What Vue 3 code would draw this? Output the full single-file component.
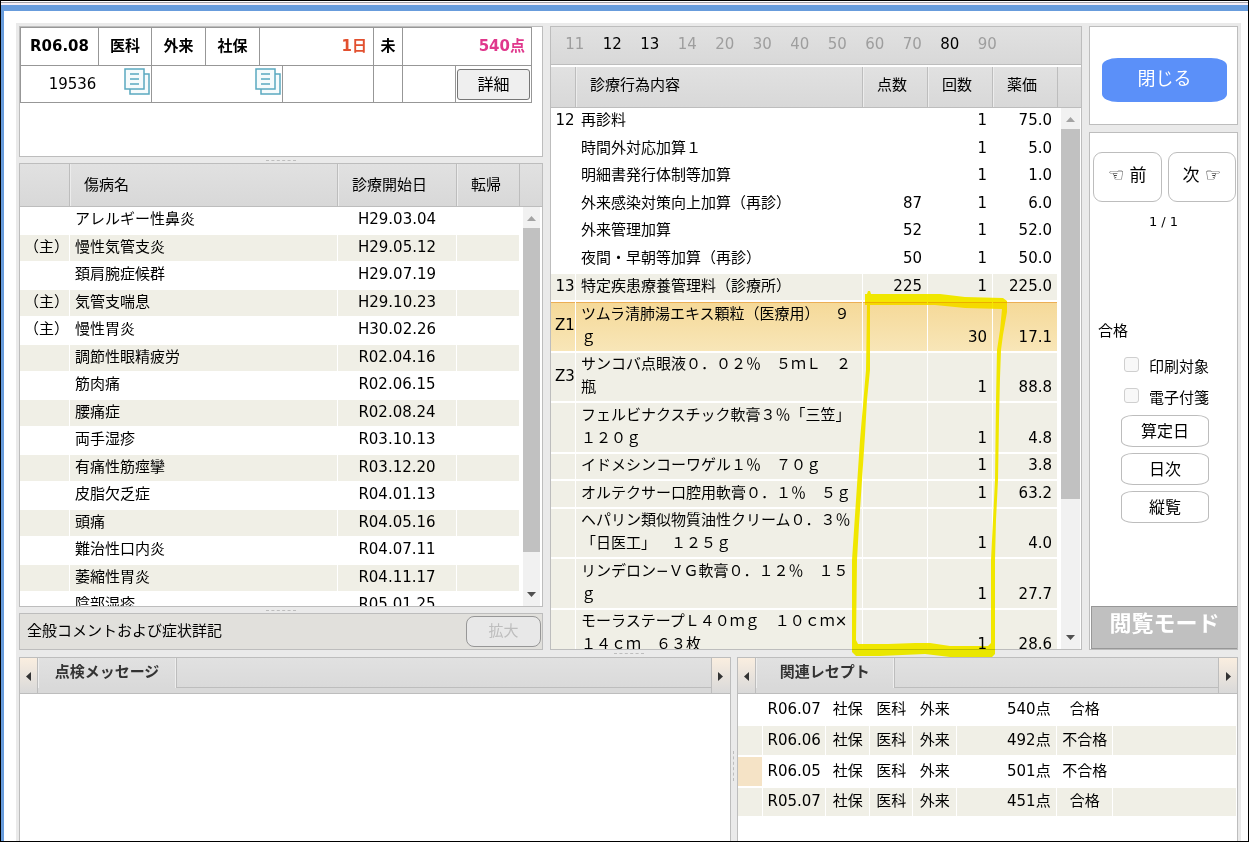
<script setup>
const sections = [
  { no: '11' }, { no: '12', on: true }, { no: '13', on: true }, { no: '14' },
  { no: '20' }, { no: '30' }, { no: '40' }, { no: '50' },
  { no: '60' }, { no: '70' }, { no: '80', on: true }, { no: '90' },
]

const diseases = [
  { main: '', name: 'アレルギー性鼻炎', date: 'H29.03.04' },
  { main: '（主）', name: '慢性気管支炎', date: 'H29.05.12' },
  { main: '', name: '頚肩腕症候群', date: 'H29.07.19' },
  { main: '（主）', name: '気管支喘息', date: 'H29.10.23' },
  { main: '（主）', name: '慢性胃炎', date: 'H30.02.26' },
  { main: '', name: '調節性眼精疲労', date: 'R02.04.16' },
  { main: '', name: '筋肉痛', date: 'R02.06.15' },
  { main: '', name: '腰痛症', date: 'R02.08.24' },
  { main: '', name: '両手湿疹', date: 'R03.10.13' },
  { main: '', name: '有痛性筋痙攣', date: 'R03.12.20' },
  { main: '', name: '皮脂欠乏症', date: 'R04.01.13' },
  { main: '', name: '頭痛', date: 'R04.05.16' },
  { main: '', name: '難治性口内炎', date: 'R04.07.11' },
  { main: '', name: '萎縮性胃炎', date: 'R04.11.17' },
  { main: '', name: '陰部湿疹', date: 'R05.01.25' },
]

const acts = [
  { size: 's', code: '12', name: '再診料', points: '', count: '1', price: '75.0' },
  { size: 'm', code: '', name: '時間外対応加算１', points: '', count: '1', price: '5.0' },
  { size: 's', code: '', name: '明細書発行体制等加算', points: '', count: '1', price: '1.0' },
  { size: 'm', code: '', name: '外来感染対策向上加算（再診）', points: '87', count: '1', price: '6.0' },
  { size: 's', code: '', name: '外来管理加算', points: '52', count: '1', price: '52.0' },
  { size: 'm', code: '', name: '夜間・早朝等加算（再診）', points: '50', count: '1', price: '50.0' },
  { size: 'm', code: '13', name: '特定疾患療養管理料（診療所）', points: '225', count: '1', price: '225.0', tone: 'shade' },
  { size: 'xl', code: 'Z1', name: 'ツムラ清肺湯エキス顆粒（医療用）　９\nｇ', points: '', count: '30', price: '17.1', tone: 'picked' },
  { size: 'l', code: 'Z3', name: 'サンコバ点眼液０．０２％　５ｍＬ　２\n瓶', points: '', count: '1', price: '88.8', tone: 'shade' },
  { size: 'xl', code: '', name: 'フェルビナクスチック軟膏３％「三笠」\n１２０ｇ', points: '', count: '1', price: '4.8', tone: 'shade' },
  { size: 's', code: '', name: 'イドメシンコーワゲル１％　７０ｇ', points: '', count: '1', price: '3.8', tone: 'shade' },
  { size: 'm', code: '', name: 'オルテクサー口腔用軟膏０．１％　５ｇ', points: '', count: '1', price: '63.2', tone: 'shade' },
  { size: 'l', code: '', name: 'ヘパリン類似物質油性クリーム０．３％\n「日医工」　１２５ｇ', points: '', count: '1', price: '4.0', tone: 'shade' },
  { size: 'xl', code: '', name: 'リンデロン−ＶＧ軟膏０．１２％　１５\nｇ', points: '', count: '1', price: '27.7', tone: 'shade' },
  { size: 'l', code: '', name: 'モーラステープＬ４０ｍｇ　１０ｃｍ×\n１４ｃｍ　６３枚', points: '', count: '1', price: '28.6', tone: 'shade' },
]

const related = [
  { month: 'R06.07', points: '540点', result: '合格' },
  { month: 'R06.06', points: '492点', result: '不合格', shade: true },
  { month: 'R06.05', points: '501点', result: '不合格', current: true },
  { month: 'R05.07', points: '451点', result: '合格', shade: true },
]
</script>

<template>
  <div class="window">
    <div class="strip"></div>
    <div class="frame">
      <main class="workspace">
        <div class="upper">
          <div class="left">
            <section class="panel patient">
              <table class="summary">
                <colgroup>
                  <col class="c78"><col class="c53"><col class="c54"><col class="c54"><col class="c23">
                  <col class="c91"><col class="c29"><col class="c53"><col class="c76">
                </colgroup>
                <tbody>
                  <tr class="first">
                    <td>R06.08</td>
                    <td>医科</td>
                    <td>外来</td>
                    <td>社保</td>
                    <td colspan="2" class="num days">1日</td>
                    <td>未</td>
                    <td colspan="2" class="num total">540点</td>
                  </tr>
                  <tr class="second">
                    <td colspan="2">
                      <div class="id-cell">
                        <span>19536</span>
                        <svg class="sheets" viewBox="0 0 26 27" aria-hidden="true">
                          <rect x="6" y="6" width="19" height="20" />
                          <rect x="1" y="1" width="19" height="20" />
                          <path d="M6 6h9M6 11h9M6 16h9" />
                        </svg>
                      </div>
                    </td>
                    <td colspan="3">
                      <div class="id-cell">
                        <span></span>
                        <svg class="sheets" viewBox="0 0 26 27" aria-hidden="true">
                          <rect x="6" y="6" width="19" height="20" />
                          <rect x="1" y="1" width="19" height="20" />
                          <path d="M6 6h9M6 11h9M6 16h9" />
                        </svg>
                      </div>
                    </td>
                    <td></td>
                    <td></td>
                    <td></td>
                    <td class="detail-cell"><button type="button" class="detail">詳細</button></td>
                  </tr>
                </tbody>
              </table>
            </section>
            <div class="splitter"></div>

            <section class="panel list diseases">
              <div class="scroller">
                <table>
                  <colgroup>
                    <col class="c50"><col><col class="c119"><col class="c63">
                  </colgroup>
                  <thead>
                    <tr><th></th><th>傷病名</th><th>診療開始日</th><th>転帰</th></tr>
                  </thead>
                  <tbody>
                    <tr v-for="(d, i) in diseases" :key="d.name" :class="i % 2 ? 'm shade' : 's'">
                      <td class="mark">{{ d.main }}</td>
                      <td class="text">{{ d.name }}</td>
                      <td class="mid">{{ d.date }}</td>
                      <td></td>
                    </tr>
                  </tbody>
                </table>
              </div>
              <div class="side">
                <div class="corner"></div>
                <div class="bar" aria-hidden="true">
                  <svg viewBox="0 0 9 5"><path d="M0 5 4.500 0 9 5z" fill="#a3a3a3" /></svg>
                  <div class="thumb tall"></div>
                  <div class="rest"></div>
                  <svg viewBox="0 0 9 5"><path d="M0 0h9L4.500 5z" fill="#505050" /></svg>
                </div>
              </div>
            </section>
            <div class="splitter"></div>

            <section class="panel comment">
              <span>全般コメントおよび症状詳記</span>
              <button type="button" class="expand" disabled>拡大</button>
            </section>
          </div>

          <div class="middle">
            <section class="panel acts-panel">
              <nav class="sections">
                <div class="section-row">
                  <button v-for="s in sections" :key="s.no" type="button" :class="{ on: s.on }">{{ s.no }}</button>
                </div>
              </nav>
              <div class="list acts">
                <div class="scroller">
                  <table>
                    <colgroup>
                      <col class="c25"><col><col class="c65"><col class="c65"><col class="c65">
                    </colgroup>
                    <thead>
                      <tr><th></th><th>診療行為内容</th><th>点数</th><th>回数</th><th>薬価</th></tr>
                    </thead>
                    <tbody>
                      <tr v-for="a in acts" :key="a.name" :class="[a.size, a.tone]">
                        <td class="code">{{ a.code }}</td>
                        <td class="text">{{ a.name }}</td>
                        <td class="num">{{ a.points }}</td>
                        <td class="num">{{ a.count }}</td>
                        <td class="num">{{ a.price }}</td>
                      </tr>
                    </tbody>
                  </table>
                </div>
                <div class="side">
                  <div class="corner"></div>
                  <div class="bar" aria-hidden="true">
                    <svg viewBox="0 0 9 5"><path d="M0 5 4.500 0 9 5z" fill="#a3a3a3" /></svg>
                    <div class="thumb short"></div>
                    <div class="rest"></div>
                    <svg viewBox="0 0 9 5"><path d="M0 0h9L4.500 5z" fill="#505050" /></svg>
                  </div>
                </div>
              </div>
            </section>
            <svg class="marker" viewBox="850 290 160 370" aria-hidden="true">
              <path fill-rule="evenodd" d="M865 294 867 294 868 291H870L871 294 940 294 965 297 1003 298 1007 301 1007 312 1003 335 1001 350 1000 378 999 420 998 480 996 520 995 560 995 654 992 657H950L925 654 880 656H856L852 652 852 560 854 530 857 485 860 440 863 405 866 370 867 305H865ZM870 305 870 370 867 400 865 435 862 480 859 525 857 560 856 640 858 644H888L915 643 930 643 950 646H988L991 643 991 560 993 520 995 480 996 400 997 350 1000 330 1002 309 965 308 935 305Z" />
            </svg>
          </div>

          <aside class="right">
            <section class="panel close-panel">
              <button type="button" class="close">閉じる</button>
            </section>
            <section class="panel control">
              <div class="pager">
                <button type="button"><span class="hand">☜</span> 前</button>
                <button type="button">次 <span class="hand">☞</span></button>
              </div>
              <div class="page">1 / 1</div>
              <div class="status">合格</div>
              <label class="check"><input type="checkbox" disabled><span>印刷対象</span></label>
              <label class="check"><input type="checkbox" disabled><span>電子付箋</span></label>
              <div class="actions">
                <button type="button">算定日</button>
                <button type="button">日次</button>
                <button type="button">縦覧</button>
              </div>
              <div class="mode">閲覧モード</div>
            </section>
          </aside>
        </div>

        <div class="between"><div class="splitter"></div></div>

        <div class="lower">
          <section class="panel tabbed messages">
            <div class="tabbar">
              <button type="button" class="arrow" aria-label="前のタブ"><svg viewBox="0 0 5 9"><path d="M5 0v9L0 4.500z" /></svg></button>
              <button type="button" class="tab">点検メッセージ</button>
              <div class="filler"></div>
              <button type="button" class="arrow next" aria-label="次のタブ"><svg viewBox="0 0 5 9"><path d="M0 0v9l5-4.500z" /></svg></button>
            </div>
          </section>
          <div class="vsplit"></div>
          <section class="panel tabbed receipts">
            <div class="tabbar">
              <button type="button" class="arrow" aria-label="前のタブ"><svg viewBox="0 0 5 9"><path d="M5 0v9L0 4.500z" /></svg></button>
              <button type="button" class="tab">関連レセプト</button>
              <div class="filler"></div>
              <button type="button" class="arrow next" aria-label="次のタブ"><svg viewBox="0 0 5 9"><path d="M0 0v9l5-4.500z" /></svg></button>
            </div>
            <table>
              <colgroup>
                <col class="c25"><col class="c63"><col class="c44"><col class="c43"><col class="c44">
                <col class="c100"><col class="c56"><col>
              </colgroup>
              <tbody>
                <tr v-for="r in related" :key="r.month" :class="{ shade: r.shade, current: r.current }">
                  <td></td>
                  <td>{{ r.month }}</td>
                  <td>社保</td>
                  <td>医科</td>
                  <td>外来</td>
                  <td class="num">{{ r.points }}</td>
                  <td>{{ r.result }}</td>
                  <td></td>
                </tr>
              </tbody>
            </table>
          </section>
        </div>
      </main>
    </div>
  </div>
</template>

<style>
body { margin: 0; background: #fff; }
</style>

<style scoped>
* { box-sizing: border-box; }
.window {
  height: 100vh;
  display: flex;
  flex-direction: column;
  border: 1px solid #000;
  background: #fff;
  color: #000;
  font-family: "DejaVu Sans", "Noto Sans CJK JP", sans-serif;
  font-size: 15px;
  line-height: 23px;
  text-spacing-trim: space-all;
  overflow: hidden;
}
button {
  font-family: inherit;
  font-size: inherit;
  line-height: inherit;
  color: inherit;
  margin: 0;
  padding: 0;
  border: 0;
  background: none;
}
table { border-collapse: separate; border-spacing: 0; table-layout: fixed; width: 100%; }
td, th { padding: 0; font-weight: normal; white-space: pre; }
.strip { height: 4px; flex: none; border-top: 1px solid #fff; border-bottom: 2px solid #f5eef5; background: #a6a4aa; }
.frame { flex: 1; min-height: 0; display: flex; border-top: 6px solid #689cdc; border-left: 3px solid #689cdc; }
.workspace {
  flex: 1;
  min-width: 0;
  margin: 12px 7px 0 12px;
  padding: 3px 3px 0;
  background: #eaeaea;
  display: flex;
  flex-direction: column;
}
.upper { flex: 1; min-height: 0; display: grid; grid-template-columns: 524fr 532fr 149px; column-gap: 7px; }
.panel { border: 1px solid #bdbdbd; background: #fff; overflow: hidden; min-width: 0; }
.left { display: flex; flex-direction: column; min-height: 0; min-width: 0; }
.splitter { height: 6px; flex: none; display: flex; align-items: center; justify-content: center; }
.splitter::after { content: ""; width: 30px; border-top: 1px dashed #bdbdbd; }
.between { height: 7px; flex: none; }
.between .splitter { height: 7px; }

.c23 { width: 23px; } .c25 { width: 25px; } .c29 { width: 29px; } .c43 { width: 43px; }
.c44 { width: 44px; } .c50 { width: 50px; } .c53 { width: 53px; } .c54 { width: 54px; }
.c56 { width: 56px; } .c63 { width: 63px; } .c65 { width: 65px; } .c76 { width: 76px; }
.c78 { width: 78px; } .c91 { width: 91px; } .c100 { width: 100px; } .c119 { width: 119px; }

.patient { height: 131px; flex: none; }
.summary { border-collapse: collapse; width: 512px; }
.summary td { border: 1px solid #979797; text-align: center; }
.summary .first td { height: 38px; font-weight: bold; }
.summary .first .num { text-align: right; padding-right: 6px; }
.summary .days { color: #e2502f; }
.summary .total { color: #e0378c; }
.summary .second td { height: 37px; }
.id-cell { display: flex; align-items: center; height: 36px; padding-right: 1px; }
.id-cell span { flex: 1; }
.sheets { width: 26px; height: 27px; margin-bottom: 6px; fill: #f6fbfc; stroke: #5aa9c0; stroke-width: 1.500; }
.summary .detail-cell { padding: 0 1px; }
.detail { display: block; width: 100%; height: 31px; border: 1px solid #767676; border-radius: 3px; background: #efefef; font-size: 16px; }

.list { display: flex; min-height: 0; }
.diseases { flex: 1; }
.scroller { flex: 1; min-width: 0; overflow: hidden; }
th { background: linear-gradient(#e1e1e1, #d8d8d8); border-right: 1px solid #bdbdbd; border-bottom: 1px solid #bdbdbd; text-align: left; padding: 0 0 3px 14px; }
th + th { box-shadow: inset 1px 0 #ececec; }
.diseases th { height: 43px; padding-bottom: 0; }
.side { display: flex; flex-direction: column; width: 22px; flex: none; }
.corner { height: 43px; flex: none; background: linear-gradient(#e1e1e1, #d8d8d8); border-bottom: 1px solid #bdbdbd; }
.bar { flex: 1; min-height: 0; display: flex; flex-direction: column; align-items: center; margin: 0 2px 0 3px; padding: 9px 0; background: #f1f1f1; }
.bar svg { width: 9px; height: 5px; flex: none; }
.thumb { width: 100%; background: #c1c1c1; margin-top: 7px; }
.tall { flex: 324; }
.tall + .rest { flex: 40; }
.short { flex: 370; }
.short + .rest { flex: 136; }
.list tbody td { border-top: 1px solid #fff; border-right: 1px solid #fff; border-bottom: 1px solid #fff; background-clip: padding-box; vertical-align: middle; line-height: 23px; padding-bottom: 2px; }
.list tbody td.text { padding-left: 5px; }
.s td { height: 27px; }
.m td { height: 28px; }
.l td { height: 50px; }
.xl td { height: 51px; }
.shade td { background-color: #f0efe6; }
.list tbody td.mark { text-align: center; padding-left: 4px; }
.mid { text-align: center; }

.comment { height: 37px; flex: none; background: #e1e0dc; display: flex; align-items: center; justify-content: space-between; padding: 0 1px 0 7px; }
.expand { width: 75px; height: 31px; border: 1px solid #979797; border-radius: 8px; background: #e8e8e8; color: #bdbdbd; }

.middle { position: relative; display: flex; min-height: 0; min-width: 0; }
.acts-panel { flex: 1; display: flex; flex-direction: column; }
.sections { height: 40px; flex: none; background: linear-gradient(#e1e1e1, #d8d8d8); border-bottom: 2px solid #fff; box-shadow: inset 0 -1px #bdbdbd; padding-left: 5px; display: flex; align-items: center; }
.section-row { display: grid; grid-template-columns: repeat(12, 1fr); width: 450px; color: #9e9e9e; padding-bottom: 3px; }
.section-row .on { color: #000; }
.acts { flex: 1; }
.acts th, .acts .corner { height: 41px; }
.acts .side { width: 23px; }
.acts .bar { margin: 0 1px 0 3px; }
.acts tbody td.num { text-align: right; vertical-align: bottom; padding-right: 5px; }
.acts tbody td.code { text-align: center; padding-left: 4px; }
.picked td { background: linear-gradient(#f5d998, #f8e6b8); background-clip: padding-box; box-shadow: inset 0 1px #ecae55; }
.marker { position: absolute; top: 264px; right: 72px; width: 160px; height: 370px; fill: #f5e700; mix-blend-mode: darken; pointer-events: none; }

.right { display: flex; flex-direction: column; gap: 7px; min-height: 0; }
.close-panel { height: 99px; flex: none; padding: 31px 10px 0 12px; }
.close { display: block; width: 100%; height: 44px; border-radius: 16px / 8px; background: #5b90f9; color: #fff; font-size: 18px; padding-bottom: 3px; }
.control { flex: 1; min-height: 0; display: flex; flex-direction: column; }
.pager { display: flex; gap: 6px; padding: 19px 1px 0 3px; }
.pager button { flex: 1; height: 50px; border: 1px solid #bdbdbd; border-radius: 9px; background: #fff; font-size: 17px; padding-bottom: 4px; }
.hand { font-size: 18px; font-weight: bold; }
.page { font-size: 13px; text-align: center; margin-top: 8px; }
.status { margin: 87px 0 0 8px; }
.check { display: flex; align-items: center; gap: 10px; padding-left: 34px; height: 31px; }
.status + .check { margin-top: 8px; }
.check input { appearance: none; width: 15px; height: 15px; margin: 0 0 4px; border: 1px solid #cfcfcf; border-radius: 3px; background: #f8f8f8; }
.check span { padding-top: 2px; }
.actions { display: flex; flex-direction: column; gap: 6px; width: 88px; margin: 2px 0 0 31px; }
.actions button { height: 32px; border: 1px solid #bdbdbd; border-radius: 12px / 6px; background: #fff; font-size: 16px; }
.mode { margin: auto 0 0 1px; height: 43px; border: 1px solid #979797; border-right: 0; background: #c0c0c0; color: #fff; font-size: 22px; font-weight: bold; line-height: 34px; text-align: center; }

.lower { height: 184px; flex: none; display: flex; }
.messages { flex: 712; }
.receipts { flex: 501; }
.vsplit { width: 6px; flex: none; display: flex; align-items: center; justify-content: center; padding-top: 34px; }
.vsplit::after { content: ""; height: 30px; border-left: 1px dashed #bdbdbd; }
.tabbed { border-bottom: 0; }
.tabbar { display: flex; height: 36px; background: #d9d9d9; border-bottom: 1px solid #bdbdbd; }
.arrow { width: 18px; flex: none; background: linear-gradient(#faeee0, #d9d9d9); border-right: 1px solid #bdbdbd; display: flex; align-items: center; justify-content: center; padding-top: 2px; }
.arrow.next { width: 19px; border-right: 0; border-left: 1px solid #bdbdbd; }
.arrow svg { width: 5px; height: 9px; fill: #333; }
.tab { height: 30px; width: 138px; flex: none; padding-bottom: 2px; background: linear-gradient(#e1e1e1, #d9d9d9); border-left: 1px solid #eee; border-right: 1px solid #eee; color: #333; font-weight: bold; }
.filler { flex: 1; height: 30px; background: linear-gradient(#e1e1e1, #dadada); border-left: 1px solid #bdbdbd; border-bottom: 1px solid #bdbdbd; }
.receipts td { height: 31px; border-top: 1px solid #fff; border-right: 1px solid #fff; border-bottom: 1px solid #fff; background-clip: padding-box; text-align: center; padding: 0 0 1px 1px; }
.receipts tr:last-child td { height: 30px; }
.receipts td.num { text-align: right; padding-right: 5px; }
.receipts .current td:first-child { background-color: #f5e3c6; }
</style>
